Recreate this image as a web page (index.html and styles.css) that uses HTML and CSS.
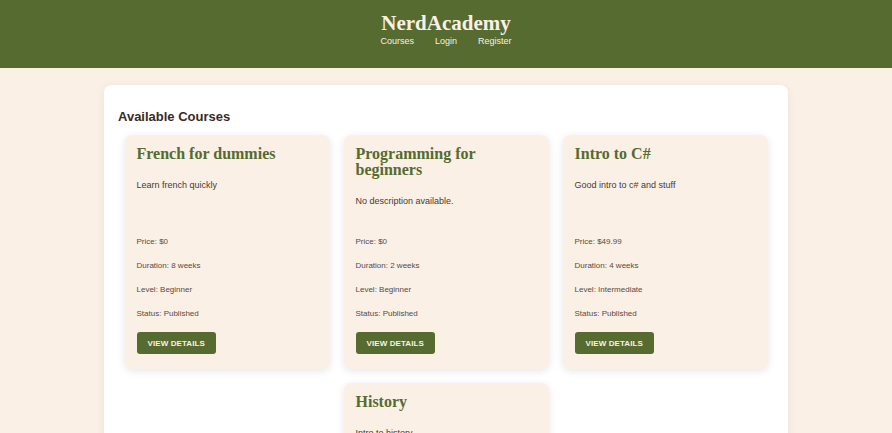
FILE: index.html
```html
<!DOCTYPE html>
<html lang="en">
<head>
<meta charset="utf-8">
<title>NerdAcademy</title>
<link rel="stylesheet" href="styles.css">
</head>
<body>
<header class="site-header">
  <h1 class="brand">NerdAcademy</h1>
  <nav class="nav">
    <a href="#">Courses</a>
    <a href="#">Login</a>
    <a href="#">Register</a>
  </nav>
</header>
<main class="panel">
  <h2 class="panel-title">Available Courses</h2>
  <div class="cards">
    <article class="card">
      <h3 class="card-title">French for dummies</h3>
      <p class="card-desc">Learn french quickly</p>
      <div class="card-meta">
        <p>Price: $0</p>
        <p>Duration: 8 weeks</p>
        <p>Level: Beginner</p>
        <p>Status: Published</p>
      </div>
      <a class="btn" href="#">View Details</a>
    </article>
    <article class="card">
      <h3 class="card-title">Programming for beginners</h3>
      <p class="card-desc">No description available.</p>
      <div class="card-meta">
        <p>Price: $0</p>
        <p>Duration: 2 weeks</p>
        <p>Level: Beginner</p>
        <p>Status: Published</p>
      </div>
      <a class="btn" href="#">View Details</a>
    </article>
    <article class="card">
      <h3 class="card-title">Intro to C#</h3>
      <p class="card-desc">Good intro to c# and stuff</p>
      <div class="card-meta">
        <p>Price: $49.99</p>
        <p>Duration: 4 weeks</p>
        <p>Level: Intermediate</p>
        <p>Status: Published</p>
      </div>
      <a class="btn" href="#">View Details</a>
    </article>
    <article class="card">
      <h3 class="card-title">History</h3>
      <p class="card-desc">Intro to history</p>
      <div class="card-meta">
        <p>Price: $0</p>
        <p>Duration: 6 weeks</p>
        <p>Level: Beginner</p>
        <p>Status: Published</p>
      </div>
      <a class="btn" href="#">View Details</a>
    </article>
  </div>
</main>
</body>
</html>
```

FILE: styles.css
```css
* { box-sizing: border-box; }

body {
  margin: 0;
  background: #faf0e6;
  font-family: "Liberation Sans", Arial, sans-serif;
  color: #3b2a1f;
}

.site-header {
  background: #556b2f;
  height: 68px;
  padding-top: 11px;
  display: flex;
  flex-direction: column;
  align-items: center;
}

.brand {
  margin: 0;
  font-family: "Liberation Serif", "Times New Roman", serif;
  font-weight: bold;
  font-size: 21px;
  line-height: 24px;
  color: #faf0e6;
}

.nav {
  margin-top: 0;
  display: flex;
  gap: 21px;
}

.nav a {
  color: #faf0e6;
  text-decoration: none;
  font-size: 9px;
  line-height: 12px;
}

.panel {
  width: 684px;
  margin: 17px auto 0;
  background: #ffffff;
  border-radius: 8px;
  padding: 24px 14px 20px;
  box-shadow: 0 2px 8px rgba(90, 60, 30, 0.08);
}

.panel-title {
  margin: 0 0 10px;
  font-size: 13px;
  line-height: 16px;
  font-weight: bold;
  color: #3b2a1f;
}

.cards {
  display: flex;
  flex-wrap: wrap;
  justify-content: center;
  gap: 14px 14px;
  padding: 0 6px;
}

.card {
  width: 205px;
  background: #faf0e6;
  border-radius: 8px;
  padding: 11px 12px 15px;
  display: flex;
  flex-direction: column;
  align-items: flex-start;
  box-shadow: 0 2px 8px rgba(0, 0, 0, 0.1);
}

.card-title {
  margin: 0;
  font-family: "Liberation Serif", "Times New Roman", serif;
  font-weight: bold;
  font-size: 16px;
  line-height: 16px;
  color: #556b2f;
}

.card-desc {
  margin: 18px 0 30px;
  font-size: 9px;
  line-height: 11px;
  color: #4a3a2f;
}

.card-meta {
  margin-top: auto;
  display: flex;
  flex-direction: column;
  gap: 14px;
}

.card-meta p {
  margin: 0;
  font-size: 8px;
  line-height: 10px;
  color: #5a4a3f;
}

.btn {
  margin-top: 13px;
  display: inline-flex;
  align-items: center;
  justify-content: center;
  height: 22px;
  padding: 0 11px;
  background: #556b2f;
  color: #faf0e6;
  border-radius: 3px;
  font-size: 8px;
  font-weight: bold;
  text-transform: uppercase;
  text-decoration: none;
  letter-spacing: 0.1px;
}
```
